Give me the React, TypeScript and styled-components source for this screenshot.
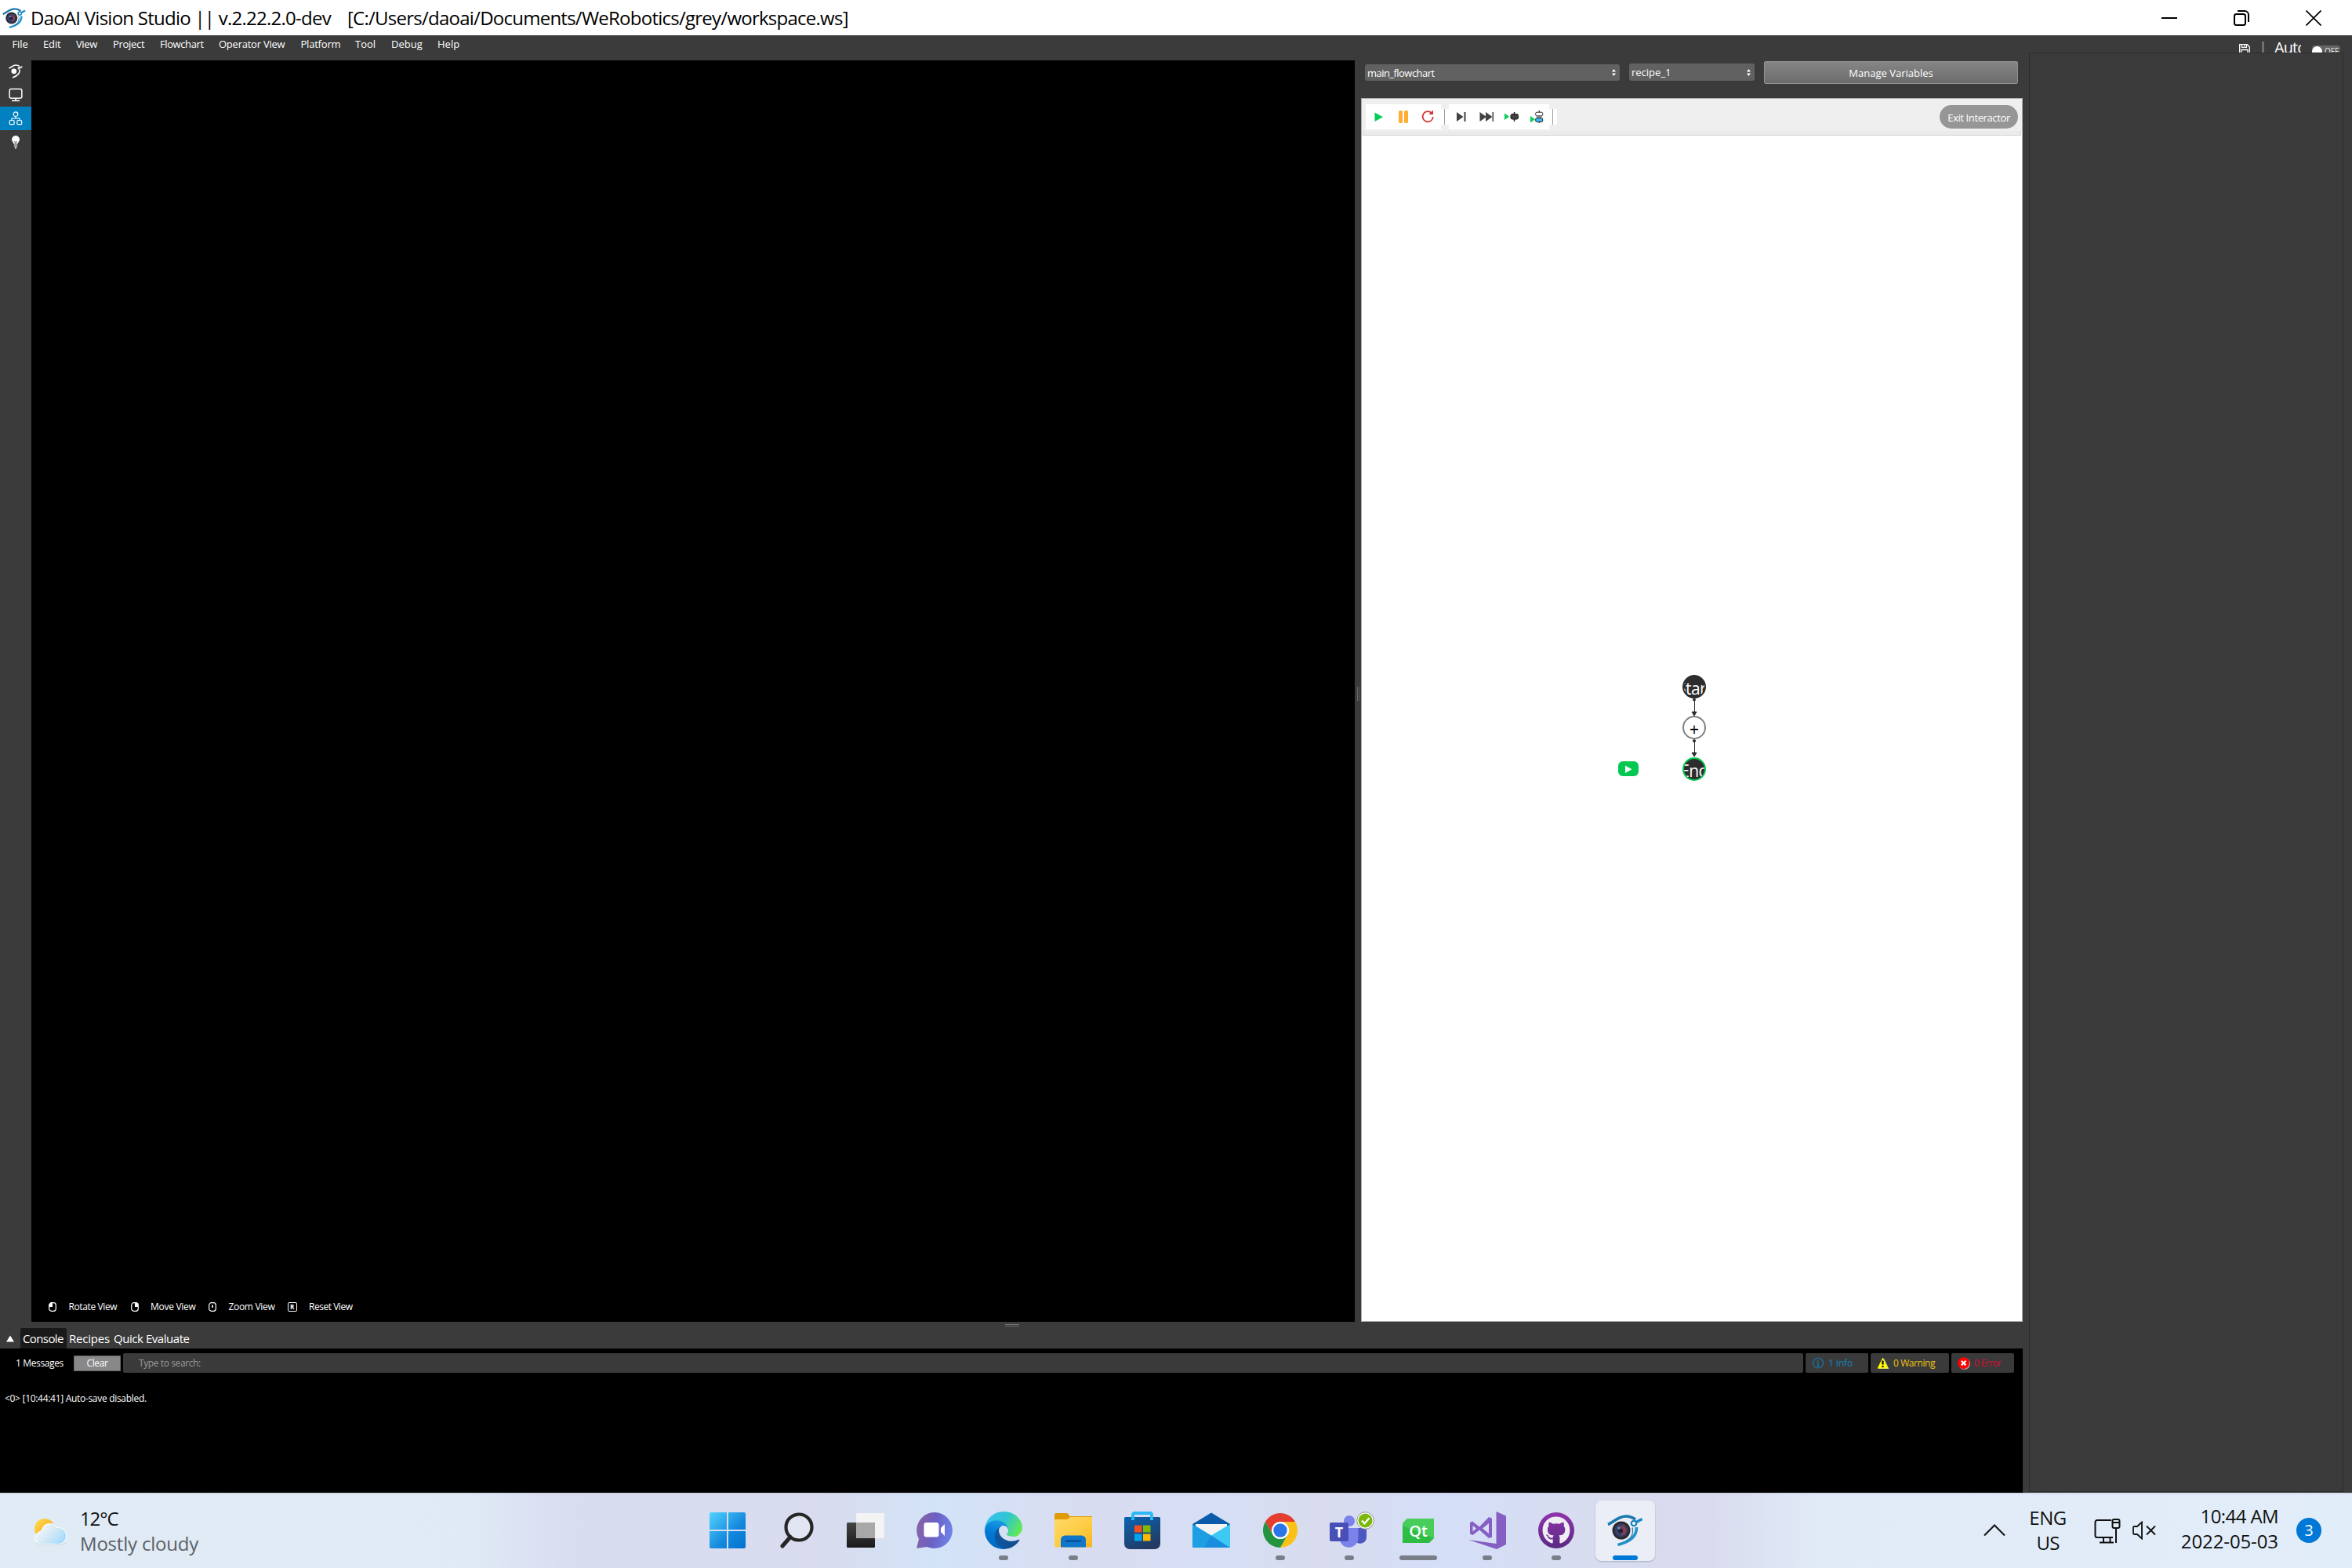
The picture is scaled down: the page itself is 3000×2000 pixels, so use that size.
import React from 'react'
import styled, { createGlobalStyle } from 'styled-components'
import { FaGithub } from 'react-icons/fa'

const App = () => {
  return (
    <Window>
      <GlobalStyle />
      <TitleBar>
        <TitleLogo><Logo /></TitleLogo>
        <Title>DaoAI Vision Studio || v.2.22.2.0-dev</Title>
        <Title>[C:/Users/daoai/Documents/WeRobotics/grey/workspace.ws]</Title>
        <Controls>
          <Control>
            <svg width="20" height="20" viewBox="0 0 20 20"><path d="M0 10h20" stroke="#000" strokeWidth="2" /></svg>
          </Control>
          <Control>
            <svg width="20" height="20" viewBox="0 0 20 20" fill="none" stroke="#000" strokeWidth="2">
              <rect x="1" y="5" width="14" height="14" rx="2.5" />
              <path d="M5 1h9a5 5 0 0 1 5 5v9" />
            </svg>
          </Control>
          <Control>
            <svg width="20" height="20" viewBox="0 0 20 20"><path d="M0.5 0.5l19 19M19.5 0.5l-19 19" stroke="#000" strokeWidth="1.7" /></svg>
          </Control>
        </Controls>
      </TitleBar>

      <MenuBar>
        {menus.map(([name, width, ls]) => (
          <MenuItem key={name} $w={width} $ls={ls}>{name}</MenuItem>
        ))}
        <MenuRight>
          <SaveIcon />
          <Divider />
          <AutoText>Auto</AutoText>
          <Toggle><Knob />OFF</Toggle>
        </MenuRight>
      </MenuBar>

      <Body>
        <Main>
          <Workspace>
            <Sidebar>
              <SideItem><EyeIcon /></SideItem>
              <SideItem><MonitorIcon /></SideItem>
              <SideItem $active><TreeIcon /></SideItem>
              <SideItem><BulbIcon /></SideItem>
            </Sidebar>
            <Viewer>
              <Hint $w={104.5} $ls={-0.39}><MouseIcon part="left" /><span>Rotate View</span></Hint>
              <Hint $w={99.5} $ls={-0.29}><MouseIcon part="right" /><span>Move View</span></Hint>
              <Hint $w={100.5} $ls={-0.31}><MouseIcon part="wheel" /><span>Zoom View</span></Hint>
              <Hint $w={100} $ls={-0.47}><KeyCap>R</KeyCap><span>Reset View</span></Hint>
            </Viewer>
            <SplitV><GripV /></SplitV>
            <FlowColumn>
              <RecipeBar>
                <Combo $w={325} $h={21} $ls={-0.54}>main_flowchart<Arrows /></Combo>
                <Combo $w={160} $h={22} $ls={0}>recipe_1<Arrows /></Combo>
                <Manage>Manage Variables</Manage>
              </RecipeBar>
              <FlowPanel>
                <Toolbar>
                  <ToolGroup $w={96}>
                    <svg width="96" height="32" viewBox="0 0 96 32">
                      <path d="M11.500 10.500v11.500l10.500-5.700z" fill="#05ce56" />
                      <rect x="42" y="8" width="5" height="16" rx="1.5" fill="#ffad33" />
                      <rect x="49" y="8" width="5" height="16" rx="1.5" fill="#ffad33" />
                      <path d="M84 11.2A6.6 6.6 0 1 0 85.8 16" stroke="#d63333" strokeWidth="1.8" fill="none" />
                      <path d="M86 7.500v5.500h-5.600z" fill="#d63333" />
                    </svg>
                  </ToolGroup>
                  <ToolSep />
                  <ToolGroup $w={128}>
                    <svg width="128" height="32" viewBox="0 0 128 32">
                      <g fill="#424242">
                        <path d="M10 10v12l8.500-6z" />
                        <rect x="19.500" y="10" width="2" height="12" />
                        <path d="M39.500 10v12l8.500-6z" />
                        <path d="M47 10v12l8.500-6z" />
                        <rect x="55.500" y="10" width="1.500" height="12" />
                      </g>
                      <path d="M71 11.500v8.500l6-4.200z" fill="#05ce56" />
                      <path d="M83.500 10v12" stroke="#222" strokeWidth="1.500" />
                      <rect x="79" y="12.500" width="9.500" height="6.500" rx="2" fill="#424242" stroke="#161616" />
                      <path d="M104 15v8.500l6-4.200z" fill="#05ce56" />
                      <path d="M115.300 8v16" stroke="#333" strokeWidth="1.300" />
                      <rect x="110.700" y="10.200" width="9" height="4.600" rx="1.500" fill="#fff" stroke="#333" />
                      <rect x="112" y="15" width="6.500" height="2.500" fill="#888" />
                      <rect x="110.700" y="17.600" width="9" height="4.800" rx="1.200" fill="#3fb4fb" stroke="#333" />
                    </svg>
                  </ToolGroup>
                  <ToolSep />
                  <Exit>Exit Interactor</Exit>
                </Toolbar>
                <ToolStrip />
                <Canvas>
                  <Edges />
                  <Node $y={688} $bg="#2d2d2d" $bc="#2d2d2d"><NodeText>Start</NodeText></Node>
                  <Node $y={740} $bg="#fff" $bc="#808080"><Plus>+</Plus></Node>
                  <Node $y={793} $bg="#2d2d2d" $bc="#05c853"><NodeText>End</NodeText></Node>
                  <PlayTag>
                    <svg width="10" height="10" viewBox="0 0 10 10"><path d="M1 0.500v9.500l8.500-4.700z" fill="#fff" /></svg>
                  </PlayTag>
                </Canvas>
              </FlowPanel>
            </FlowColumn>
          </Workspace>

          <SplitH><GripH /></SplitH>
          <Tabs>
            <TabToggle>
              <svg width="10" height="9" viewBox="0 0 10 9"><path d="M5 0.500L10 8.500H0z" fill="#fff" /></svg>
            </TabToggle>
            <Tab $w={59} $ls={-0.6} $active>Console</Tab>
            <Tab $w={57} $ls={-0.2}>Recipes</Tab>
            <Tab $w={103} $ls={-0.45}>Quick Evaluate</Tab>
          </Tabs>
          <Console>
            <FilterRow>
              <Count>1 Messages</Count>
              <Clear>Clear</Clear>
              <Search>Type to search:</Search>
              <Filter $w={80} $c="#1283bd" $ls={-0.15}>
                <svg width="16" height="16" viewBox="0 0 16 16" fill="none" stroke="#1178ad">
                  <circle cx="8" cy="7.500" r="6.500" strokeWidth="1.200" />
                  <path d="M8 6.500v5M8 3.500v1.500M6.500 6.500h1.500M6.500 11.300h3" strokeWidth="1.400" />
                </svg>
                1 Info
              </Filter>
              <Filter $w={100} $c="#eec314" $ls={-0.42}>
                <svg width="16" height="16" viewBox="0 0 16 16">
                  <path d="M9 1.500l6.500 13.500H2z" fill="#aaa" />
                  <path d="M7.500 0.500L14.500 14.500H0.500z" fill="#ff0" />
                  <path d="M7.500 4.500v5M7.500 11v2" stroke="#000" strokeWidth="2.200" />
                </svg>
                0 Warning
              </Filter>
              <Filter $w={80} $c="#dc0a37" $ls={-0.6}>
                <svg width="16" height="16" viewBox="0 0 16 16">
                  <circle cx="8.600" cy="8.400" r="7.400" fill="#aaa" />
                  <circle cx="7.600" cy="7.600" r="7.400" fill="#f00" />
                  <path d="M4.800 4.800l5.600 5.600M10.400 4.800l-5.600 5.600" stroke="#fff" strokeWidth="2.200" />
                </svg>
                0 Error
              </Filter>
            </FilterRow>
            <Log>&lt;0&gt; [10:44:41] Auto-save disabled.</Log>
          </Console>
        </Main>
        <Dock />
      </Body>

      <Taskbar>
        <Weather>
          <WeatherIcon />
          <div>
            <Temp>12°C</Temp>
            <Sky>Mostly cloudy</Sky>
          </div>
        </Weather>
        <Apps>
          <AppTile><StartIcon /></AppTile>
          <AppTile><SearchIcon /></AppTile>
          <AppTile><TaskViewIcon /></AppTile>
          <AppTile><ChatIcon /></AppTile>
          <AppTile><EdgeIcon /><Dot /></AppTile>
          <AppTile><FolderIcon /><Dot /></AppTile>
          <AppTile><StoreIcon /></AppTile>
          <AppTile><MailIcon /></AppTile>
          <AppTile><ChromeIcon /><Dot /></AppTile>
          <AppTile><TeamsIcon /><Dot /></AppTile>
          <AppTile><QtIcon /><Dot $w={48} /></AppTile>
          <AppTile><StudioIcon /><Dot /></AppTile>
          <AppTile><Hub><FaGithub size={36} /></Hub><Dot /></AppTile>
          <AppTile $active><TileLogo><Logo /></TileLogo><Dot $w={32} $c="#0078d7" /></AppTile>
        </Apps>
        <Tray>
          <Chevron width="28" height="16" viewBox="0 0 28 16" fill="none" stroke="#111" strokeWidth="2">
            <path d="M1 14.500L14 1.500l13 13" />
          </Chevron>
          <Lang>
            <LangText $ls={-0.5}>ENG</LangText>
            <LangText $ls={-0.8}>US</LangText>
          </Lang>
          <NetIcon />
          <MuteIcon />
          <Clock>
            <ClockText $ls={-0.6}>10:44 AM</ClockText>
            <ClockText $ls={-0.1}>2022-05-03</ClockText>
          </Clock>
          <Badge>3</Badge>
        </Tray>
      </Taskbar>
    </Window>
  )
}

export default App

// name, width, letter spacing
const menus: [string, number, number][] = [
  ['File', 39.5, -0.09],
  ['Edit', 42, -0.15],
  ['View', 47, -0.4],
  ['Project', 60, -0.29],
  ['Flowchart', 75, -0.4],
  ['Operator View', 104.5, -0.24],
  ['Platform', 69.5, -0.21],
  ['Tool', 46, 0],
  ['Debug', 59, 0.05],
  ['Help', 40, 0],
]

const Logo = () => (
  <svg width="100%" height="100%" viewBox="0 0 46 40" preserveAspectRatio="none" fill="none">
    <path d="M1 12.500C9 9 14 2 24 2c5 0 9 1.800 12 4.200" stroke="#1a78ad" strokeWidth="3.600" />
    <path d="M44.500 5.500L37 9.500" stroke="#1a88c4" strokeWidth="3.600" />
    <circle cx="34" cy="11" r="3.200" stroke="#1583c2" strokeWidth="2.200" fill="#fff" />
    <path d="M37.500 16c0 12-8 18-24 22.500" stroke="#2191c9" strokeWidth="3.600" />
    <path d="M32 16.500c2 8-2 14-8 17" stroke="#2a7fa8" strokeWidth="1.400" />
    <circle cx="18" cy="20" r="11.500" fill="#2b2a30" />
    <circle cx="18" cy="20" r="8.500" fill="#34406a" />
    <path d="M18 13.500a6.500 6.500 0 0 1 0 13z" fill="#8a3a4d" />
    <circle cx="17" cy="20.500" r="3" fill="#1c2338" />
    <circle cx="15" cy="17" r="1.800" fill="#6f8fb5" />
  </svg>
)

const EyeIcon = () => (
  <svg width="18" height="18" viewBox="0 0 18 18" fill="none" stroke="#fff" strokeWidth="1.600">
    <path d="M0.500 5C4 3.600 6 1 9 1c2.500 0 4 .8 5 1.600" />
    <path d="M17.500 3l-3 1.500M14 7c.6 4.500-3 8-9 10" />
    <circle cx="13.300" cy="5" r="1.100" strokeWidth="1.200" />
    <circle cx="6.800" cy="8.800" r="3.400" fill="#fff" stroke="none" />
  </svg>
)

const MonitorIcon = () => (
  <svg width="18" height="18" viewBox="0 0 18 18" fill="none" stroke="#fff" strokeWidth="1.500">
    <rect x="1.200" y="1.500" width="15.600" height="11.800" rx="2" />
    <path d="M9 13.300v3M4 16.500h10" />
  </svg>
)

const TreeIcon = () => (
  <svg width="18" height="18" viewBox="0 0 18 18" fill="none" stroke="#fff" strokeWidth="1.200">
    <circle cx="9" cy="3.700" r="2.800" />
    <path d="M9 6.500V9M4 11.500V9h10v2.500" />
    <rect x="1.300" y="11.500" width="5.800" height="5.200" rx="1.300" />
    <rect x="10.900" y="11.500" width="5.800" height="5.200" rx="1.300" />
  </svg>
)

const BulbIcon = () => (
  <svg width="18" height="18" viewBox="0 0 18 18">
    <path d="M9 1a4.900 4.900 0 0 1 5 4.900c0 2.300-2 3.300-2.500 5.600h-5C6 9.200 4 8.200 4 5.900A4.900 4.900 0 0 1 9 1z" fill="#fff" />
    <path d="M7.200 8.500l1.800 1 1.800-1M9 9.500v2" stroke="#555" fill="none" />
    <path d="M6.800 13h4.400M7 15h4M8 16.800h2" stroke="#fff" strokeWidth="1.200" />
  </svg>
)

const MouseIcon = ({ part }: { part: string }) => (
  <svg width="10" height="12" viewBox="0 0 10 12">
    <rect x="0.700" y="0.700" width="8.600" height="10.600" rx="3" fill="none" stroke="#fff" strokeWidth="1.200" />
    {part === 'left' && <path d="M5 0.500v5.500H0.700V4A3.600 3.600 0 0 1 5 0.500z" fill="#fff" />}
    {part === 'right' && <path d="M5 0.500v5.500h4.300V4A3.600 3.600 0 0 0 5 0.500z" fill="#fff" />}
    {part === 'wheel' && <rect x="4.200" y="3.500" width="1.600" height="3.500" fill="#fff" />}
  </svg>
)

const SaveIcon = () => (
  <SaveSvg width="14" height="14" viewBox="0 0 14 14" fill="none" stroke="#fff" strokeWidth="1.300">
    <path d="M0.700 0.700h9.600l3 3v9.600H0.700z" />
    <path d="M3.500 0.700v3.600h6V0.700M3 14V7.500h8V14" />
    <path d="M7 1v2.500" />
  </SaveSvg>
)

const Arrows = () => (
  <svg width="5" height="9" viewBox="0 0 5 9" fill="#fff">
    <path d="M2.500 0L5 3.500H0zM2.500 9L5 5.500H0z" />
  </svg>
)

const Edges = () => (
  <EdgeSvg width="10" height="80" viewBox="0 0 10 80">
    <g stroke="#2d2d2d" fill="#2d2d2d">
      <path d="M5.500 3v16M5.500 55v16" strokeWidth="1" />
      <circle cx="5" cy="2.500" r="1.500" />
      <path d="M2 18h6l-3 5z" />
      <circle cx="5" cy="55" r="1.500" />
      <path d="M2 70h6l-3 5z" />
    </g>
  </EdgeSvg>
)

const WeatherIcon = () => (
  <svg width="44" height="36" viewBox="0 0 44 36">
    <defs>
      <linearGradient id="sun" x1="0" y1="0" x2="1" y2="1"><stop offset="0" stopColor="#ffe04a" /><stop offset="1" stopColor="#f5961e" /></linearGradient>
      <linearGradient id="cloud" x1="0" y1="0" x2="1" y2="0.600"><stop offset="0" stopColor="#fff" /><stop offset="0.500" stopColor="#dcebf6" /><stop offset="1" stopColor="#a9dcfa" /></linearGradient>
    </defs>
    <circle cx="14" cy="14" r="13" fill="url(#sun)" />
    <path d="M9 33.500a8 8 0 0 1-1-15.800C9 16 10 16 10.500 16A10 10 0 0 1 29 12.300 10.600 10.600 0 1 1 33 33.500z" fill="url(#cloud)" stroke="#fff" />
    <path d="M3 32c3 3.400 34 3.400 38 0" stroke="#c3ccd4" strokeWidth="0.800" fill="none" />
  </svg>
)

const StartIcon = () => (
  <svg width="46" height="46" viewBox="0 0 46 46">
    <defs>
      <linearGradient id="win" x1="0" y1="0" x2="1" y2="1" gradientUnits="objectBoundingBox"><stop offset="0" stopColor="#52d3ff" /><stop offset="0.600" stopColor="#1488dc" /><stop offset="1" stopColor="#0072d0" /></linearGradient>
    </defs>
    <path d="M2 0h20v22H0V2a2 2 0 0 1 2-2zM24 0h20a2 2 0 0 1 2 2v20H24zM0 24h22v22H2a2 2 0 0 1-2-2zM24 24h22v20a2 2 0 0 1-2 2H24z" fill="url(#win)" />
  </svg>
)

const SearchIcon = () => (
  <svg width="44" height="46" viewBox="0 0 44 46" fill="none" stroke="#262626">
    <circle cx="25" cy="19" r="16.500" fill="#fff" fillOpacity="0.250" strokeWidth="4.200" />
    <path d="M14 31.500L4 43" strokeWidth="5" strokeLinecap="round" />
  </svg>
)

const TaskViewIcon = () => (
  <svg width="48" height="44" viewBox="0 0 48 44">
    <defs>
      <linearGradient id="tvd" x1="0" y1="0" x2="0" y2="1"><stop offset="0" stopColor="#444" /><stop offset="1" stopColor="#1a1a1a" /></linearGradient>
    </defs>
    <rect x="0" y="12" width="36" height="32" rx="1.500" fill="url(#tvd)" />
    <rect x="12" y="0" width="36" height="32" rx="1.500" fill="#f3f3f3" />
    <rect x="12" y="12" width="24" height="20" fill="#a8a8a8" />
  </svg>
)

const ChatIcon = () => (
  <svg width="46" height="46" viewBox="0 0 46 46">
    <defs>
      <linearGradient id="chat" x1="0" y1="0.300" x2="1" y2="0.500"><stop offset="0" stopColor="#8c63a6" /><stop offset="0.500" stopColor="#6a60c4" /><stop offset="1" stopColor="#6f83e8" /></linearGradient>
    </defs>
    <path d="M23 0a23 23 0 1 1-9.500 44L1.500 45.800C0.200 46 0 45 0.500 44L3 34A23 23 0 0 1 23 0z" fill="url(#chat)" />
    <rect x="9.500" y="13" width="19" height="18.500" rx="3" fill="#fff" />
    <path d="M31 20l5-5v15l-5-5z" fill="#fff" />
  </svg>
)

const EdgeIcon = () => (
  <svg width="48" height="48" viewBox="0 0 256 256">
    <defs>
      <linearGradient id="e1" x1="0" y1="0" x2="1" y2="0"><stop offset="0" stopColor="#0c59a4" /><stop offset="1" stopColor="#114a8b" /></linearGradient>
      <linearGradient id="e2" x1="0.500" y1="0" x2="0.300" y2="1"><stop offset="0" stopColor="#1b9de2" /><stop offset="0.500" stopColor="#0078d4" /><stop offset="1" stopColor="#0067c0" /></linearGradient>
      <linearGradient id="e3" x1="0" y1="0.300" x2="1" y2="0.700"><stop offset="0" stopColor="#35c1f1" /><stop offset="0.500" stopColor="#2fc5d0" /><stop offset="1" stopColor="#66eb4a" /></linearGradient>
    </defs>
    <path fill="url(#e1)" d="M231 190.500c-3.400 1.800-6.900 3.400-10.500 4.700-11.500 4.300-23.600 6.500-35.900 6.500-47.300 0-88.500-32.500-88.500-74.300.1-11.400 6.400-21.900 16.400-27.300-42.800 1.800-53.800 46.400-53.800 72.500 0 73.900 68.100 81.400 82.800 81.400 7.900 0 19.800-2.300 27-4.600l1.300-.4c27.600-9.500 51-28.100 66.600-52.800 1.200-1.900.6-4.300-1.200-5.500-1.300-.8-2.900-.9-4.200-.2z" />
    <path fill="url(#e2)" d="M105.700 241.400c-8.900-5.500-16.600-12.800-22.700-21.300-26.300-36-18.400-86.500 17.600-112.800 3.800-2.700 7.700-5.200 11.900-7.200 3.100-1.500 8.400-4.100 15.500-4 10.100.1 19.600 4.900 25.700 13 4 5.400 6.300 11.900 6.400 18.700 0-.2 24.500-79.600-80-79.600-43.900 0-80 41.700-80 78.200-.2 19.300 4 38.500 12.100 56 27.600 58.800 94.800 87.600 156.400 67.100-21.100 6.600-44.100 3.700-62.900-8.100z" />
    <path fill="url(#e3)" d="M152.300 148.900c-.8 1-3.300 2.500-3.300 5.700 0 2.600 1.700 5.100 4.700 7.200 14.400 10 41.500 8.700 41.600 8.700 10.700 0 21.100-2.900 30.300-8.300 18.800-11 30.400-31.100 30.400-52.900.3-22.400-8-37.300-11.300-43.900C223.500 23.900 177.700 0 128 0 58 0 1 56.200 0 126.200c.5-36.500 36.800-66 80-66 3.500 0 23.500.3 42 10.100 16.300 8.600 24.900 18.900 30.800 29.200 6.200 10.700 7.300 24.100 7.300 29.500 0 5.300-2.700 13.300-7.800 19.900z" />
  </svg>
)

const FolderIcon = () => (
  <svg width="48" height="44" viewBox="0 0 48 44">
    <defs>
      <linearGradient id="fold" x1="0" y1="0" x2="1" y2="1"><stop offset="0" stopColor="#ffd968" /><stop offset="0.600" stopColor="#fecb41" /><stop offset="1" stopColor="#f8b21a" /></linearGradient>
    </defs>
    <path d="M2 0h13c2 0 3 1 4.500 4H48v10H0V2a2 2 0 0 1 2-2z" fill="#df9b06" />
    <path d="M0 8h15c2 0 3-1 5-3h28v37a1.500 1.500 0 0 1-1.500 1.500H1.500A1.500 1.500 0 0 1 0 42z" fill="url(#fold)" />
    <path d="M8 43.500V34a5.500 5.500 0 0 1 5.500-5.500h21A5.500 5.500 0 0 1 40 34v9.500z" fill="#0e77cb" />
    <rect x="14" y="34.500" width="20" height="2.200" rx="1" fill="#0b4a90" />
  </svg>
)

const StoreIcon = () => (
  <svg width="46" height="48" viewBox="0 0 46 48">
    <defs>
      <linearGradient id="store" x1="0" y1="0" x2="0.500" y2="1"><stop offset="0" stopColor="#0a65b3" /><stop offset="1" stopColor="#223b63" /></linearGradient>
    </defs>
    <path d="M0 8.500A1.500 1.500 0 0 1 1.500 7h43A1.500 1.500 0 0 1 46 8.500V41a7 7 0 0 1-7 7H7a7 7 0 0 1-7-7z" fill="url(#store)" />
    <path d="M11 11V4a2 2 0 0 1 2-2h20a2 2 0 0 1 2 2v7" fill="none" stroke="#2ab9f5" strokeWidth="3.800" />
    <rect x="13" y="17.500" width="9.500" height="9" fill="#f25022" />
    <rect x="24" y="17.500" width="9.500" height="9" fill="#7fba00" />
    <rect x="13" y="28.500" width="9.500" height="9" fill="#00a4ef" />
    <rect x="24" y="28.500" width="9.500" height="9" fill="#ffb900" />
  </svg>
)

const MailIcon = () => (
  <svg width="48" height="46" viewBox="0 0 48 46">
    <path d="M0 15L24 0.500 48 15v4H0z" fill="#0a5cab" />
    <path d="M4 15h40v14H4z" fill="#f4f4f4" />
    <path d="M0 15v30h48L24 29.500z" fill="#1f9fe3" />
    <path d="M48 15v30L24 29.500z" fill="#3ccaf4" />
    <path d="M24 29.500L48 45H14z" fill="#1888dc" opacity="0.800" />
  </svg>
)

const ChromeIcon = () => (
  <svg width="44" height="44" viewBox="-22 -22 44 44">
    <path d="M-19.050-11A22 22 0 0 1 19.050-11L0-11-9.530 5.500z" fill="#e33e30" />
    <path d="M19.050-11A22 22 0 0 1 0 22L9.530 5.500A11 11 0 0 0 0-11z" fill="#fdc116" />
    <path d="M0 22A22 22 0 0 1-19.050-11L-9.530 5.500A11 11 0 0 0 9.530 5.500z" fill="#23943f" />
    <circle r="11" fill="#fff" />
    <circle r="8.700" fill="#2a75e8" />
  </svg>
)

const TeamsIcon = () => (
  <TeamsSvg width="57" height="48" viewBox="0 0 57 48">
    <path d="M34 21h13v12a8 8 0 0 1-13 6z" fill="#4d57c0" />
    <circle cx="25" cy="12" r="7" fill="#7b83eb" />
    <path d="M13 21h23.500v14a12 12 0 0 1-23.500 2z" fill="#7b83eb" />
    <rect x="0" y="14" width="24" height="24" rx="2" fill="#4850b8" />
    <TeamsT x="12" y="33">T</TeamsT>
    <circle cx="45.500" cy="11.500" r="10.800" fill="#fff" stroke="#8a8f94" />
    <circle cx="45.500" cy="11.500" r="9" fill="#7ab80b" />
    <path d="M41 11.500l3.500 3.800 6-7" fill="none" stroke="#fff" strokeWidth="2.400" />
  </TeamsSvg>
)

const QtIcon = () => (
  <svg width="40" height="31" viewBox="0 0 40 31">
    <path d="M6 0h34v25l-6 6H0V6z" fill="#2fbc45" />
    <path d="M6 0h34v25L0 9V6z" fill="#48cc5a" />
    <QtText x="20" y="23">Qt</QtText>
  </svg>
)

const StudioIcon = () => (
  <svg width="48" height="48" viewBox="0 0 48 48" fill="#865fc5">
    <path d="M35.500 0L48 5.500V42L36 48 0 36l35.500 5z" />
    <path fillRule="evenodd" d="M2 14l3-1.500 9 7L26 7l4 1.800v24L26 34 14 23.500 5.500 30 2 28.500zM5.500 18v7.500l4.500-4zM18 21.500l8 6.500V15z" />
  </svg>
)

const NetIcon = () => (
  <NetSvg width="34" height="33" viewBox="0 0 34 33" fill="none" stroke="#111" strokeWidth="2">
    <path d="M22 3H4a2.500 2.500 0 0 0-2.500 2.500v17A2.500 2.500 0 0 0 4 25h20M12 25v6M20.500 25v6M7 31.500h18" />
    <rect x="23.500" y="2" width="9" height="11" rx="2" />
    <path d="M23.500 6h9M28 13v19" />
  </NetSvg>
)

const MuteIcon = () => (
  <svg width="32" height="24" viewBox="0 0 32 24" fill="none" stroke="#111" strokeWidth="1.800">
    <path d="M2 8.500a1.500 1.500 0 0 1 1.500-1.500H7l6-5.500v21L7 17H3.500A1.500 1.500 0 0 1 2 15.500z" />
    <path d="M19 6.500l11 11M30 6.500l-11 11" />
  </svg>
)

const GlobalStyle = createGlobalStyle`
  * {
    box-sizing: border-box;
  }
  body {
    margin: 0;
    background: #3b3b3b;
    overflow: hidden;
  }
  svg {
    display: block;
    flex: none;
  }
`

const Window = styled.div`
  width: 3000px;
  height: 2000px;
  display: flex;
  flex-direction: column;
  font-family: 'Open Sans', 'Noto Sans', sans-serif;
  color: white;
  background: #3b3b3b;
  white-space: pre;
`

const TitleBar = styled.div`
  height: 45px;
  flex: none;
  display: flex;
  align-items: center;
  background: white;
  color: black;
`

const TitleLogo = styled.div`
  width: 30px;
  height: 26px;
  margin-left: 3px;
  margin-right: 6px;
`

const Title = styled.div`
  font-size: 24px;
  line-height: 45px;
  letter-spacing: -0.75px;
  margin-right: 21px;
`

const Controls = styled.div`
  display: flex;
  margin-left: auto;
  padding-right: 3px;
`

const Control = styled.div`
  width: 92px;
  height: 45px;
  display: flex;
  align-items: center;
  justify-content: center;
`

const MenuBar = styled.div`
  height: 22px;
  flex: none;
  display: flex;
  padding-left: 15.5px;
  overflow: hidden;
`

const MenuItem = styled.div<{ $w: number, $ls: number }>`
  width: ${(props) => props.$w}px;
  flex: none;
  font-size: 13px;
  line-height: 22px;
  letter-spacing: ${(props) => props.$ls}px;
`

const MenuRight = styled.div`
  display: flex;
  margin-left: auto;
  width: 144px;
`

const SaveSvg = styled.svg`
  margin-top: 11px;
`

const Divider = styled.div`
  width: 3px;
  height: 14px;
  margin: 8px 13px 0 15px;
  background: #707070;
`

const AutoText = styled.div`
  width: 34px;
  height: 22px;
  font-size: 20px;
  line-height: 31px;
  letter-spacing: -0.9px;
  overflow: hidden;
`

const Toggle = styled.div`
  width: 36px;
  height: 14px;
  margin: 13px 0 0 14px;
  display: flex;
  align-items: center;
  border-radius: 4px;
  background: linear-gradient(#6a6a6a, #444);
  color: #eee;
  font-size: 10px;
  line-height: 14px;
`

const Knob = styled.div`
  width: 13px;
  height: 13px;
  margin-right: 3px;
  border-radius: 50%;
  background: white;
`

const Body = styled.div`
  height: 1837px;
  flex: none;
  display: flex;
`

const Main = styled.div`
  width: 2580px;
  flex: none;
  display: flex;
  flex-direction: column;
`

const Workspace = styled.div`
  height: 1619px;
  flex: none;
  display: flex;
`

const Sidebar = styled.div`
  width: 40px;
  padding-top: 9px;
`

const SideItem = styled.div<{ $active?: boolean }>`
  height: 30px;
  display: flex;
  align-items: center;
  justify-content: center;
  background: ${(props) => (props.$active ? '#0281c0' : 'transparent')};
`

const Viewer = styled.div`
  width: 1688px;
  margin-top: 10px;
  padding: 0 0 9px 22px;
  display: flex;
  align-items: flex-end;
  background: black;
`

const Hint = styled.div<{ $w: number, $ls: number }>`
  width: ${(props) => props.$w}px;
  display: flex;
  align-items: center;
  gap: 15.5px;
  font-size: 12px;
  line-height: 20px;
  letter-spacing: ${(props) => props.$ls}px;
`

const KeyCap = styled.div`
  width: 12px;
  height: 12px;
  border: 1px solid white;
  border-radius: 2px;
  font-size: 8px;
  font-weight: 700;
  line-height: 10px;
  text-align: center;
`

const SplitV = styled.div`
  width: 8px;
  display: flex;
  align-items: center;
  justify-content: center;
`

const GripV = styled.div`
  width: 3px;
  height: 18px;
  margin-top: 16px;
  border-left: 1px solid #666;
  border-right: 1px solid #555;
`

const FlowColumn = styled.div`
  width: 844px;
  display: flex;
  flex-direction: column;
`

const RecipeBar = styled.div`
  height: 58px;
  display: flex;
  align-items: flex-start;
  padding: 11px 6px 0 5px;
`

const Combo = styled.div<{ $w: number, $h: number, $ls: number }>`
  width: ${(props) => props.$w}px;
  height: ${(props) => props.$h}px;
  margin-top: ${(props) => 25 - props.$h}px;
  margin-right: 12px;
  padding: 0 5px 0 3px;
  display: flex;
  align-items: center;
  justify-content: space-between;
  border-radius: 3px;
  background: #616161;
  font-size: 13px;
  letter-spacing: ${(props) => props.$ls}px;
`

const Manage = styled.div`
  flex: 1;
  height: 29px;
  border: 1px solid #929292;
  border-radius: 2px;
  background: linear-gradient(#858585, #6c6c6c);
  font-size: 13px;
  line-height: 28px;
  text-align: center;
`

const FlowPanel = styled.div`
  flex: 1;
  display: flex;
  flex-direction: column;
  border: 1px solid #a9a9a9;
  background: white;
`

const Toolbar = styled.div`
  height: 41px;
  display: flex;
  align-items: center;
  padding: 5px 5px 0;
  background: #efefef;
`

const ToolGroup = styled.div<{ $w: number }>`
  width: ${(props) => props.$w}px;
  height: 32px;
  background: white;
`

const ToolSep = styled.div`
  width: 10px;
  height: 20px;
  background: linear-gradient(90deg, white 4px, #a0a0a0 4px, #a0a0a0 5px, white 5px);
`

const Exit = styled.div`
  width: 100px;
  height: 30px;
  margin-left: auto;
  border-radius: 15px;
  background: #969696;
  font-size: 13px;
  line-height: 32px;
  letter-spacing: -0.38px;
  text-align: center;
`

const ToolStrip = styled.div`
  height: 6px;
  margin: 0 1px;
  background: #ebebeb;
  border: 1px solid #d2d2d2;
  border-top: none;
`

const Canvas = styled.div`
  flex: 1;
  position: relative;
`

const EdgeSvg = styled.svg`
  position: absolute;
  left: 419px;
  top: 717px;
`

const Node = styled.div<{ $y: number, $bg: string, $bc: string }>`
  position: absolute;
  left: 409px;
  top: ${(props) => props.$y}px;
  width: 30px;
  height: 30px;
  display: flex;
  align-items: center;
  justify-content: center;
  overflow: hidden;
  border: 2px solid ${(props) => props.$bc};
  border-radius: 50%;
  background: ${(props) => props.$bg};
`

const NodeText = styled.span`
  flex: none;
  margin-top: 3px;
  font-size: 21px;
  line-height: 26px;
  letter-spacing: -0.6px;
`

const Plus = styled.span`
  margin-top: 4px;
  font-size: 21px;
  line-height: 26px;
  color: black;
`

const PlayTag = styled.div`
  position: absolute;
  left: 327px;
  top: 798px;
  width: 26px;
  height: 19px;
  display: flex;
  align-items: center;
  justify-content: center;
  border-radius: 6px;
  background: #05c853;
`

const SplitH = styled.div`
  height: 8px;
  flex: none;
  display: flex;
  align-items: center;
  justify-content: center;
`

const GripH = styled.div`
  width: 18px;
  height: 3px;
  margin-left: 2px;
  border-top: 1px solid #777;
  border-bottom: 1px solid #666;
`

const Tabs = styled.div`
  height: 26px;
  flex: none;
  display: flex;
`

const TabToggle = styled.div`
  width: 26px;
  display: flex;
  align-items: center;
  justify-content: center;
`

const Tab = styled.div<{ $w: number, $ls: number, $active?: boolean }>`
  width: ${(props) => props.$w}px;
  padding-left: 3px;
  border-radius: 2px 2px 0 0;
  background: ${(props) => (props.$active ? '#191919' : 'transparent')};
  font-size: 15px;
  line-height: 26px;
  letter-spacing: ${(props) => props.$ls}px;
`

const Console = styled.div`
  flex: 1;
  padding-top: 6px;
  background: black;
`

const FilterRow = styled.div`
  height: 25px;
  display: flex;
  align-items: center;
  font-size: 12px;
`

const Count = styled.div`
  width: 94px;
  padding-left: 20px;
  letter-spacing: -0.37px;
`

const Clear = styled.div`
  width: 60px;
  height: 20px;
  margin-right: 3px;
  border: 1px solid #666;
  background: #888;
  line-height: 18px;
  letter-spacing: -0.4px;
  text-align: center;
`

const Search = styled.div`
  width: 2143px;
  height: 25px;
  padding-left: 20px;
  border-radius: 2px;
  background: #3a3a3a;
  color: #9a9a9a;
  line-height: 25px;
  letter-spacing: -0.4px;
`

const Filter = styled.div<{ $w: number, $c: string, $ls: number }>`
  width: ${(props) => props.$w}px;
  height: 25px;
  margin-left: 3px;
  padding-left: 8px;
  display: flex;
  align-items: center;
  gap: 5px;
  border-radius: 2px;
  background: #3a3a3a;
  color: ${(props) => props.$c};
  letter-spacing: ${(props) => props.$ls}px;
`

const Log = styled.div`
  margin-top: 23px;
  padding-left: 6px;
  font-size: 12px;
  line-height: 20px;
  letter-spacing: -0.3px;
`

const Dock = styled.div`
  width: 401px;
  height: 1836px;
  margin-left: 8px;
  border: 1px solid #2c2c2c;
`

const Taskbar = styled.div`
  height: 96px;
  flex: none;
  display: grid;
  grid-template-columns: 884px 1232px 1fr;
  color: #111;
  background: linear-gradient(90deg, #e0ebf5 0, #dfeaf5 600px, #d9ddf0 720px, #d8dcee 1050px, #d3e3f7 1190px, #d9dcf1 1400px, #d6dff5 1560px, #d9dcee 1680px, #d4dff8 1840px, #d9dcee 2060px, #d9dcef 2180px, #e1ebf7 2330px, #e1edf9 3000px);
  border-top: 2px solid rgba(120, 130, 150, 0.12);
`

const Weather = styled.div`
  display: flex;
  padding: 30px 0 0 43px;
  gap: 15px;
  > div {
    margin-top: -15px;
  }
`

const Temp = styled.div`
  font-size: 24px;
  line-height: 32px;
  letter-spacing: -1.1px;
`

const Sky = styled.div`
  font-size: 24px;
  line-height: 32px;
  letter-spacing: -0.2px;
  color: #5b6066;
`

const Apps = styled.div`
  display: grid;
  grid-template-columns: repeat(14, 88.1px);
  align-content: start;
  padding-top: 8px;
`

const AppTile = styled.div<{ $active?: boolean }>`
  height: 77px;
  margin: 0 6px;
  display: grid;
  grid-template-rows: 70px 6px;
  place-items: center;
  border-radius: 8px;
  background: ${(props) => (props.$active ? '#ebeef7' : 'transparent')};
  box-shadow: ${(props) => (props.$active ? '0 1px 2px rgba(90, 100, 120, 0.4)' : 'none')};
  > svg, > div:first-child {
    margin-top: 6px;
  }
`

const Dot = styled.div<{ $w?: number, $c?: string }>`
  width: ${(props) => props.$w || 12}px;
  height: 6px;
  border-radius: 3px;
  background: ${(props) => props.$c || '#7a7e89'};
`

const TileLogo = styled.div`
  width: 46px;
  height: 40px;
`

const Hub = styled.div`
  width: 46px;
  height: 46px;
  display: flex;
  align-items: center;
  justify-content: center;
  border-radius: 50%;
  background: linear-gradient(#8f34ab, #5b2a83);
  color: #f0ecf4;
`

const TeamsSvg = styled.svg`
  margin-left: 8px;
`

const TeamsT = styled.text`
  font-size: 18px;
  font-weight: 700;
  fill: white;
  text-anchor: middle;
`

const QtText = styled.text`
  font-size: 20px;
  font-weight: 600;
  fill: white;
  text-anchor: middle;
`

const Tray = styled.div`
  display: flex;
  align-items: flex-start;
  padding-left: 414px;
  > svg {
    margin-top: 34px;
  }
`

const Chevron = styled.svg`
  position: relative;
  top: 4px;
`

const Lang = styled.div`
  width: 56px;
  margin: 14px 31px 0 26px;
  text-align: center;
`

const LangText = styled.div<{ $ls: number }>`
  font-size: 24px;
  line-height: 32px;
  letter-spacing: ${(props) => props.$ls}px;
`

const NetSvg = styled.svg`
  position: relative;
  top: -4px;
  margin-right: 14px;
`

const Clock = styled.div`
  width: 140px;
  margin: 12px 23px 0 15px;
  text-align: right;
`

const ClockText = styled.div<{ $ls: number }>`
  font-size: 24px;
  line-height: 32px;
  letter-spacing: ${(props) => props.$ls}px;
`

const Badge = styled.div`
  width: 32px;
  height: 32px;
  margin-top: 30px;
  border-radius: 50%;
  background: #0078d7;
  color: white;
  font-size: 20px;
  line-height: 32px;
  text-align: center;
`
